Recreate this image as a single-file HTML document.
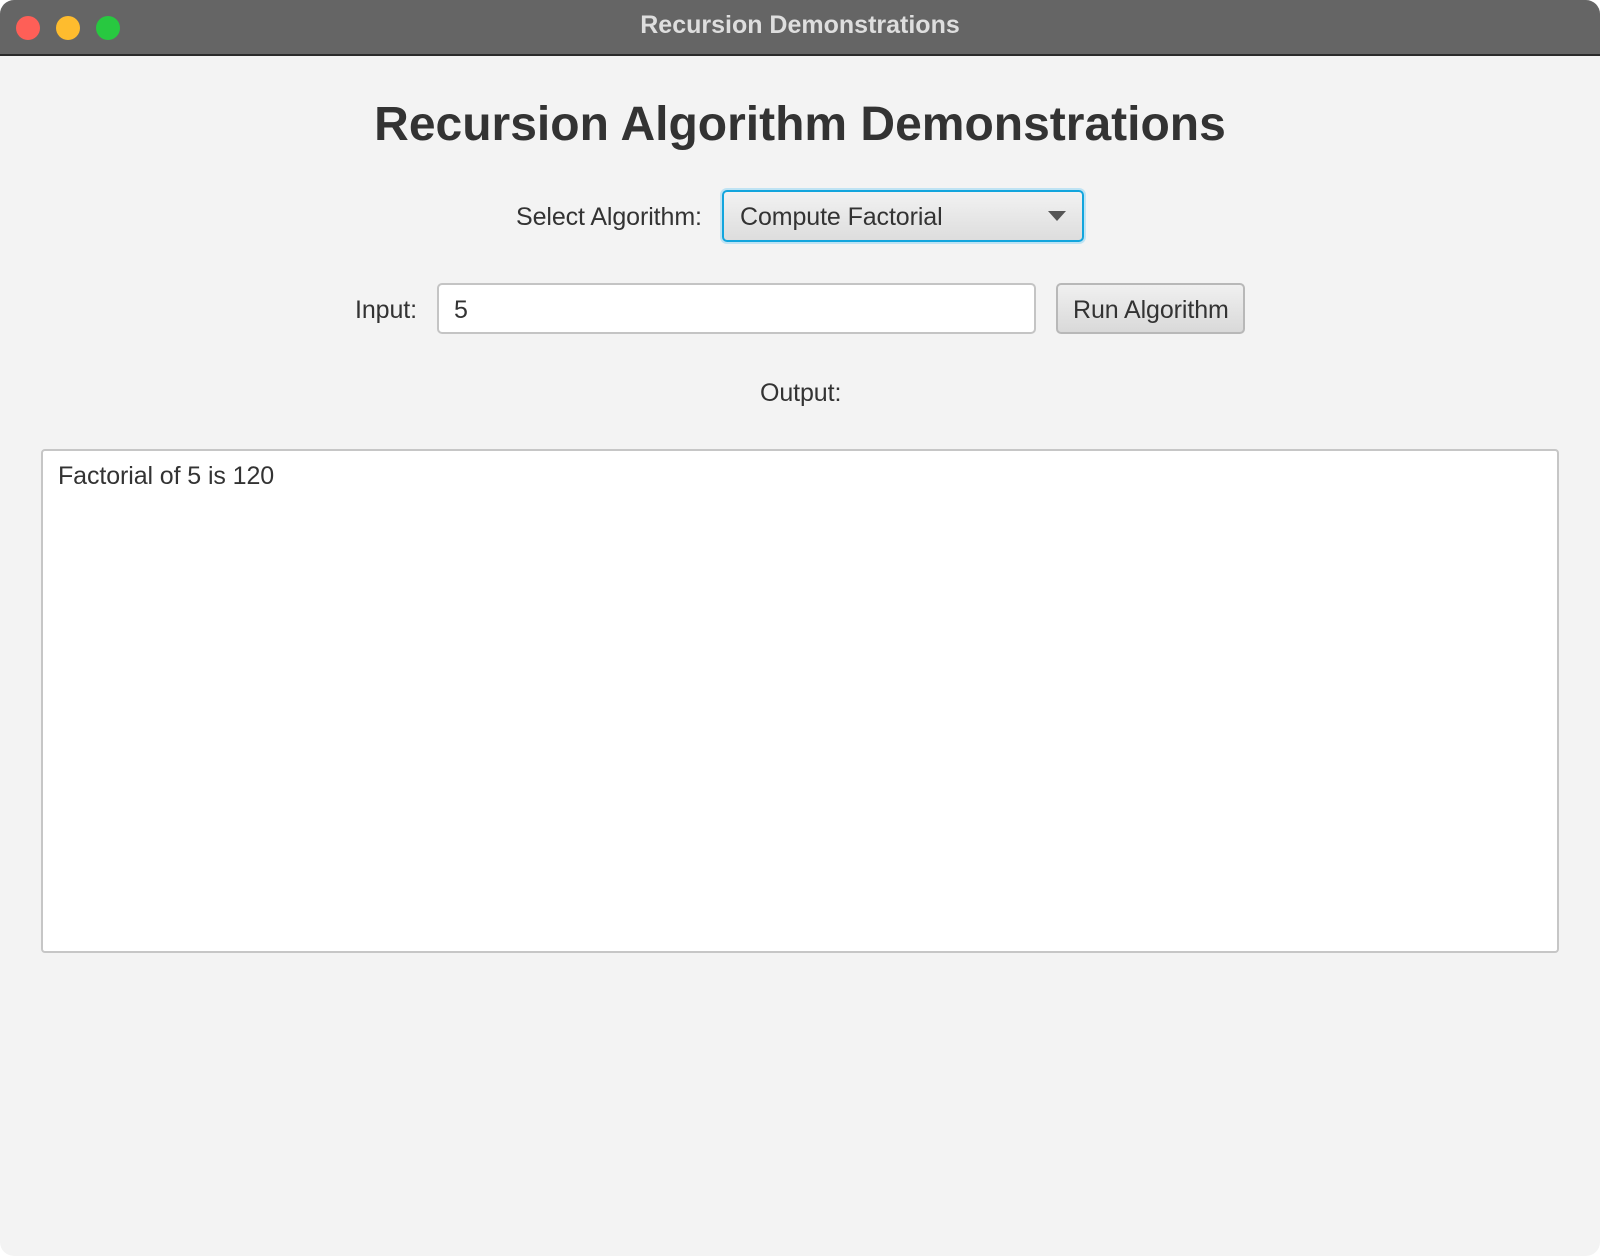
<!DOCTYPE html>
<html><head><meta charset="utf-8"><style>
*{box-sizing:border-box;margin:0;padding:0}
body{width:1600px;height:1256px;background:#fff;font-family:"Liberation Sans",sans-serif;color:#333;position:relative;overflow:hidden}
.win{position:absolute;left:0;top:0;width:1600px;height:1256px;background:#f3f3f3;border-radius:14px;overflow:hidden}
.tb{position:absolute;left:0;top:0;width:1600px;height:56px;background:#656565;border-bottom:2px solid #2a2a2a}
.dot{position:absolute;top:16px;width:24px;height:24px;border-radius:50%}
.tt{position:absolute;left:0;width:1600px;top:11px;text-align:center;color:#dedede;font-weight:bold;font-size:25px}
.a{position:absolute;white-space:nowrap}
.lbl{font-size:25px;letter-spacing:-0.1px;color:#333}
</style></head><body><div class="win">
<div class="tb">
<div class="dot" style="left:16px;background:#fe5f57"></div>
<div class="dot" style="left:56px;background:#febc2e"></div>
<div class="dot" style="left:96px;background:#28c840"></div>
<div class="tt">Recursion Demonstrations</div>
</div>
<div class="a" style="left:0;width:1600px;top:97px;text-align:center;font-weight:bold;font-size:48px;color:#333">Recursion Algorithm Demonstrations</div>
<div class="a lbl" style="left:516px;top:203px">Select Algorithm:</div>
<div class="a" style="left:722px;top:190px;width:362px;height:52px;border:2px solid #12a5dd;border-radius:5px;background:linear-gradient(#f2f2f2,#dddddd);box-shadow:0 0 0 2px #bfe3f3"></div>
<div class="a lbl" style="left:740px;top:203px">Compute Factorial</div>
<svg class="a" style="left:1048px;top:211px" width="20" height="12"><path d="M0 0 L18 0 L9 10 Z" fill="#555"/></svg>
<div class="a lbl" style="left:355px;top:296px">Input:</div>
<div class="a" style="left:437px;top:283px;width:599px;height:51px;background:#fff;border:2px solid #c4c4c4;border-radius:5px"></div>
<div class="a lbl" style="left:454px;top:296px">5</div>
<div class="a" style="left:1056px;top:283px;width:189px;height:51px;border:2px solid #b8b8b8;border-radius:5px;background:linear-gradient(#f0f0f0,#d9d9d9)"></div>
<div class="a lbl" style="left:1073px;top:296px">Run Algorithm</div>
<div class="a lbl" style="left:760px;top:379px">Output:</div>
<div class="a" style="left:41px;top:449px;width:1518px;height:504px;background:#fff;border:2px solid #c6c6c6;border-radius:4px"></div>
<div class="a lbl" style="left:58px;top:462px">Factorial of 5 is 120</div>
</div></body></html>
